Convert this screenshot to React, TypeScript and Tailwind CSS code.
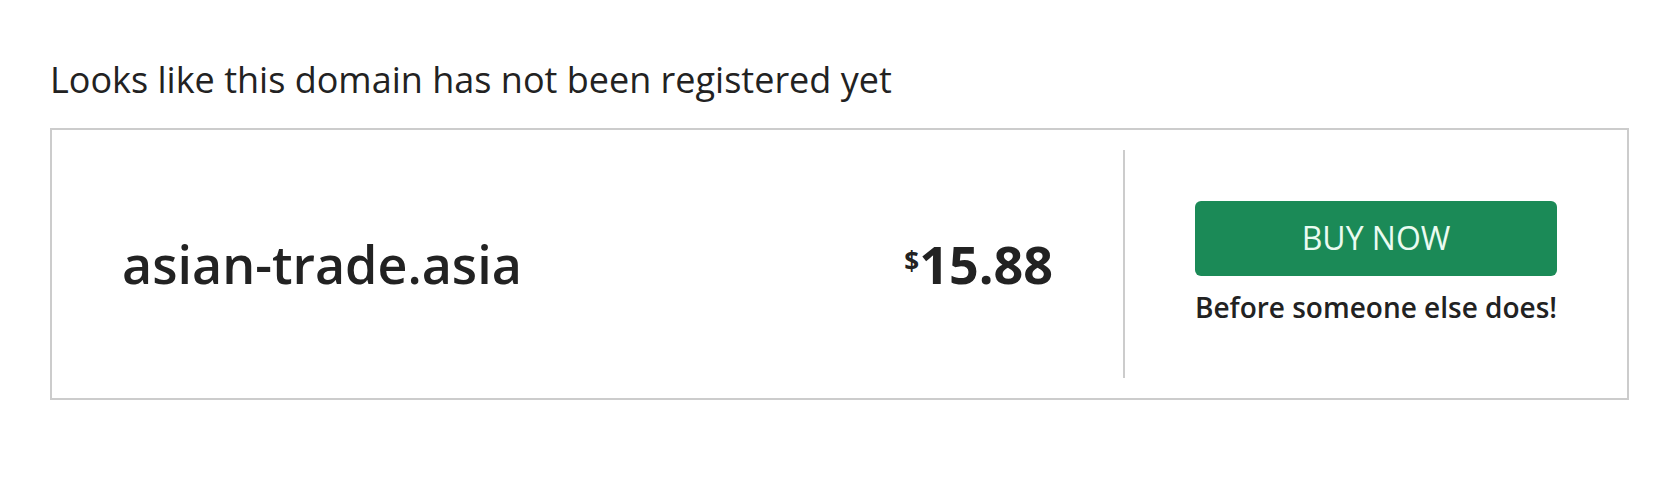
import React from "react";

export default function App() {
  return (
    <div className="w-[1657px] h-[491px] bg-white pl-[50px] pr-[28px] pt-[56px] text-[#222]" style={{ fontFamily: '"Open Sans", sans-serif' }}>
      <h1 className="text-[36px] leading-[48px] font-normal">Looks like this domain has not been registered yet</h1>
      <div className="mt-[24px] h-[272px] border-2 border-[#ccc] flex">
        <div className="flex-1 flex items-center justify-between pl-[70px] pr-[70px]">
          <div className="text-[52px] font-semibold leading-none">asian-trade.asia</div>
          <div className="flex items-start">
            <span className="text-[26px] font-bold leading-none mt-[10px]">$</span>
            <span className="text-[52px] font-bold leading-none">15.88</span>
          </div>
        </div>
        <div className="w-[2px] bg-[#ccc] my-[20px]" />
        <div className="w-[502px] flex flex-col items-center justify-center pb-[2px]">
          <button className="w-[362px] h-[75px] rounded-[6px] bg-[#1b8a57] text-[#eafbf1] text-[32px] leading-none font-normal flex items-center justify-center">
            BUY NOW
          </button>
          <div className="mt-[12px] text-[28px] leading-[38px] font-semibold">Before someone else does!</div>
        </div>
      </div>
    </div>
  );
}
